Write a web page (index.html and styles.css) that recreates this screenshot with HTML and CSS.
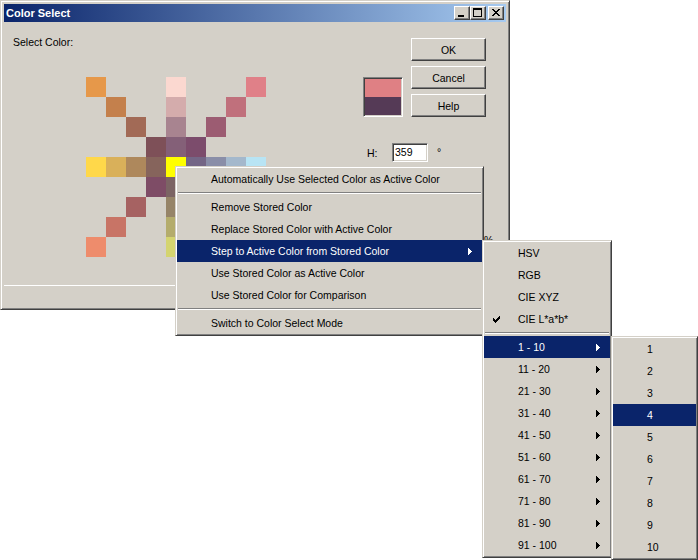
FILE: index.html
```html
<!DOCTYPE html>
<html>
<head>
<meta charset="utf-8">
<title>Color Select</title>
<link rel="stylesheet" href="styles.css">
</head>
<body>
<div class="desk">
  <div class="window">
    <div class="titlebar">
      <span class="title">Color Select</span>
      <div class="caps">
        <div class="cap"><svg width="6" height="2" class="g-min"><rect x="0" y="0" width="6" height="2"/></svg></div>
        <div class="cap cap-max"><svg width="9" height="9" class="g-max"><path d="M0 0H9V9H0Z M1 2V8H8V2Z" fill-rule="evenodd"/></svg></div>
        <div class="cap"><svg width="8" height="7" class="g-close"><path d="M0 0H2V1H3V2H5V1H6V0H8V1H7V2H6V3H5V4H6V5H7V6H8V7H6V6H5V5H3V6H2V7H0V6H1V5H2V4H3V3H2V2H1V1H0Z"/></svg></div>
      </div>
    </div>
    <div class="client">
      <div class="main">
        <div class="picker">
          <div class="label">Select Color:</div>
          <div class="grid">
            <i style="background:#e6984a"></i><i></i><i></i><i></i><i style="background:#fbd8d0"></i><i></i><i></i><i></i><i style="background:#e08088"></i>
            <i></i><i style="background:#c4804c"></i><i></i><i></i><i style="background:#d4acac"></i><i></i><i></i><i style="background:#c0707c"></i><i></i>
            <i></i><i></i><i style="background:#a26a56"></i><i></i><i style="background:#a88490"></i><i></i><i style="background:#9c5c72"></i><i></i><i></i>
            <i></i><i></i><i></i><i style="background:#7e5058"></i><i style="background:#846078"></i><i style="background:#7c4c6c"></i><i></i><i></i><i></i>
            <i style="background:#ffd84a"></i><i style="background:#d9b05a"></i><i style="background:#ae885c"></i><i style="background:#86645c"></i><i style="background:#ffff00"></i><i style="background:#746686"></i><i style="background:#8a8ea8"></i><i style="background:#a4b8cc"></i><i style="background:#b8e4f4"></i>
            <i></i><i></i><i></i><i style="background:#7e4c66"></i><i style="background:#7c6464"></i><i style="background:#6e6070"></i><i></i><i></i><i></i>
            <i></i><i></i><i style="background:#a66262"></i><i></i><i style="background:#968468"></i><i></i><i style="background:#7c7c6c"></i><i></i><i></i>
            <i></i><i style="background:#c87466"></i><i></i><i></i><i style="background:#b4ac6c"></i><i></i><i></i><i style="background:#a0a070"></i><i></i>
            <i style="background:#ee8c6c"></i><i></i><i></i><i></i><i style="background:#d4d470"></i><i></i><i></i><i></i><i style="background:#c8dc78"></i>
          </div>
        </div>
        <div class="side">
          <div class="side-top">
            <div class="swatch"><div class="sw-new"></div><div class="sw-old"></div></div>
            <div class="buttons">
              <div class="btn">OK</div>
              <div class="btn">Cancel</div>
              <div class="btn">Help</div>
            </div>
          </div>
          <div class="field-row">
            <span class="flabel">H:</span>
            <span class="edit">359</span>
            <span class="unit">°</span>
          </div>
          <div class="pct-row"><span>%</span></div>
        </div>
      </div>
      <div class="groove"></div>
    </div>
  </div>

  <div class="menu menu-main">
    <div class="item"><span>Automatically Use Selected Color as Active Color</span></div>
    <div class="sep"></div>
    <div class="item"><span>Remove Stored Color</span></div>
    <div class="item"><span>Replace Stored Color with Active Color</span></div>
    <div class="item hl"><span>Step to Active Color from Stored Color</span><svg class="arrow" width="4" height="7"><path d="M0 0H1V1H2V2H3V3H4V4H3V5H2V6H1V7H0Z"/></svg></div>
    <div class="item"><span>Use Stored Color as Active Color</span></div>
    <div class="item"><span>Use Stored Color for Comparison</span></div>
    <div class="sep"></div>
    <div class="item"><span>Switch to Color Select Mode</span></div>
  </div>

  <div class="menu menu-sub1">
    <div class="item"><span>HSV</span></div>
    <div class="item"><span>RGB</span></div>
    <div class="item"><span>CIE XYZ</span></div>
    <div class="item"><span class="check"><svg width="7" height="7"><path d="M6 0H7V3H6V4H5V5H4V6H3V7H2V6H1V5H0V2H1V3H2V4H3V3H4V2H5V1H6Z"/></svg></span><span>CIE L*a*b*</span></div>
    <div class="sep"></div>
    <div class="item hl"><span>1 - 10</span><svg class="arrow" width="4" height="7"><path d="M0 0H1V1H2V2H3V3H4V4H3V5H2V6H1V7H0Z"/></svg></div>
    <div class="item"><span>11 - 20</span><svg class="arrow" width="4" height="7"><path d="M0 0H1V1H2V2H3V3H4V4H3V5H2V6H1V7H0Z"/></svg></div>
    <div class="item"><span>21 - 30</span><svg class="arrow" width="4" height="7"><path d="M0 0H1V1H2V2H3V3H4V4H3V5H2V6H1V7H0Z"/></svg></div>
    <div class="item"><span>31 - 40</span><svg class="arrow" width="4" height="7"><path d="M0 0H1V1H2V2H3V3H4V4H3V5H2V6H1V7H0Z"/></svg></div>
    <div class="item"><span>41 - 50</span><svg class="arrow" width="4" height="7"><path d="M0 0H1V1H2V2H3V3H4V4H3V5H2V6H1V7H0Z"/></svg></div>
    <div class="item"><span>51 - 60</span><svg class="arrow" width="4" height="7"><path d="M0 0H1V1H2V2H3V3H4V4H3V5H2V6H1V7H0Z"/></svg></div>
    <div class="item"><span>61 - 70</span><svg class="arrow" width="4" height="7"><path d="M0 0H1V1H2V2H3V3H4V4H3V5H2V6H1V7H0Z"/></svg></div>
    <div class="item"><span>71 - 80</span><svg class="arrow" width="4" height="7"><path d="M0 0H1V1H2V2H3V3H4V4H3V5H2V6H1V7H0Z"/></svg></div>
    <div class="item"><span>81 - 90</span><svg class="arrow" width="4" height="7"><path d="M0 0H1V1H2V2H3V3H4V4H3V5H2V6H1V7H0Z"/></svg></div>
    <div class="item"><span>91 - 100</span><svg class="arrow" width="4" height="7"><path d="M0 0H1V1H2V2H3V3H4V4H3V5H2V6H1V7H0Z"/></svg></div>
  </div>

  <div class="menu menu-sub2">
    <div class="item"><span>1</span></div>
    <div class="item"><span>2</span></div>
    <div class="item"><span>3</span></div>
    <div class="item hl"><span>4</span></div>
    <div class="item"><span>5</span></div>
    <div class="item"><span>6</span></div>
    <div class="item"><span>7</span></div>
    <div class="item"><span>8</span></div>
    <div class="item"><span>9</span></div>
    <div class="item"><span>10</span></div>
  </div>
</div>
</body>
</html>
```

FILE: styles.css
```css
html, body {
  margin: 0;
  padding: 0;
  background: #ffffff;
}

body {
  font-family: "Liberation Sans", Arial, sans-serif;
  font-size: 10.5px;
  color: #000;
}

.desk {
  position: relative;
  width: 698px;
  height: 560px;
  overflow: hidden;
}

svg {
  display: block;
  shape-rendering: crispEdges;
  fill: currentColor;
}

/* ---------- window ---------- */
.window {
  width: 510px;
  height: 310px;
  box-sizing: border-box;
  background: #d4d0c8;
  border: 1px solid;
  border-color: #d4d0c8 #404040 #404040 #d4d0c8;
  box-shadow: inset 1px 1px #ffffff, inset -1px -1px #808080;
  padding: 3px;
  display: flex;
  flex-direction: column;
}

.titlebar {
  height: 18px;
  flex: none;
  display: flex;
  align-items: center;
  padding: 0 2px;
  background: linear-gradient(to right, #0a246a, #a6caf0);
}

.title {
  flex: 1;
  color: #ffffff;
  font-weight: bold;
  font-size: 11px;
  white-space: nowrap;
}

.caps {
  display: flex;
}

.cap {
  width: 16px;
  height: 14px;
  box-sizing: border-box;
  background: #d4d0c8;
  border: 1px solid;
  border-color: #ffffff #404040 #404040 #ffffff;
  box-shadow: inset -1px -1px #808080;
  position: relative;
  color: #000;
}

.cap svg {
  position: absolute;
}

.cap-max {
  margin-right: 2px;
}

.g-min { left: 3px; top: 8px; }
.g-max { left: 2px; top: 1px; }
.g-close { left: 3px; top: 2px; }

.client {
  flex: 1;
  display: flex;
  flex-direction: column;
}

.main {
  height: 263px;
  display: flex;
}

.picker {
  width: 359px;
}

.label {
  margin: 14px 0 0 9px;
  height: 13px;
  line-height: 13px;
}

.grid {
  margin: 28px 0 0 82px;
  display: grid;
  grid-template-columns: repeat(9, 20px);
  grid-auto-rows: 20px;
  width: 180px;
}

.grid i {
  display: block;
}

.side {
  width: 143px;
}

.side-top {
  display: flex;
  align-items: flex-start;
}

.swatch {
  margin-top: 55px;
  width: 40px;
  height: 40px;
  box-sizing: border-box;
  border: 1px solid;
  border-color: #808080 #ffffff #ffffff #808080;
  box-shadow: inset 1px 1px #404040, inset -1px -1px #d4d0c8;
  padding: 1px;
  display: flex;
  flex-direction: column;
}

.sw-new { flex: 1; background: #df8084; }
.sw-old { flex: 1; background: #553a56; }

.buttons {
  margin: 16px 0 0 8px;
  display: flex;
  flex-direction: column;
  gap: 5px;
}

.btn {
  width: 75px;
  height: 23px;
  box-sizing: border-box;
  border: 1px solid;
  border-color: #ffffff #404040 #404040 #ffffff;
  box-shadow: inset -1px -1px #808080;
  display: flex;
  align-items: center;
  justify-content: center;
}

.field-row {
  margin-top: 26px;
  height: 19px;
  display: flex;
  align-items: center;
  padding-left: 4px;
}

.flabel {
  width: 25px;
}

.edit {
  width: 36px;
  height: 19px;
  box-sizing: border-box;
  background: #ffffff;
  border: 1px solid;
  border-color: #808080 #ffffff #ffffff #808080;
  box-shadow: inset 1px 1px #404040, inset -1px -1px #d4d0c8;
  padding-left: 2px;
  line-height: 17px;
}

.unit {
  margin-left: 9px;
  align-self: flex-start;
  line-height: 19px;
}

.pct-row {
  margin-top: 69px;
  height: 18px;
  line-height: 18px;
  padding-left: 121px;
}

.groove {
  height: 1px;
  background: #ffffff;
}

/* ---------- menus ---------- */
.menu {
  position: absolute;
  box-sizing: border-box;
  background: #d4d0c8;
  border: 1px solid;
  border-color: #d4d0c8 #404040 #404040 #d4d0c8;
  box-shadow: inset 1px 1px #ffffff, inset -1px -1px #808080;
  padding: 1px;
}

.menu-main { left: 175px; top: 166px; width: 309px; }
.menu-sub1 { left: 482px; top: 240px; width: 130px; }
.menu-sub2 { left: 611px; top: 336px; width: 87px; }

.item {
  height: 22px;
  display: flex;
  align-items: center;
  padding-left: 34px;
  white-space: nowrap;
  color: #000;
}

.item.hl {
  background: #0a246a;
  color: #ffffff;
}

.arrow {
  margin-left: auto;
  margin-right: 10px;
}

.check {
  width: 16px;
  margin-left: -25px;
  margin-right: 9px;
  display: flex;
}

.sep {
  height: 6px;
  box-sizing: border-box;
  padding: 2px 1px 0;
}

.sep::before {
  content: "";
  display: block;
  border-top: 1px solid #808080;
  border-bottom: 1px solid #ffffff;
}
```
